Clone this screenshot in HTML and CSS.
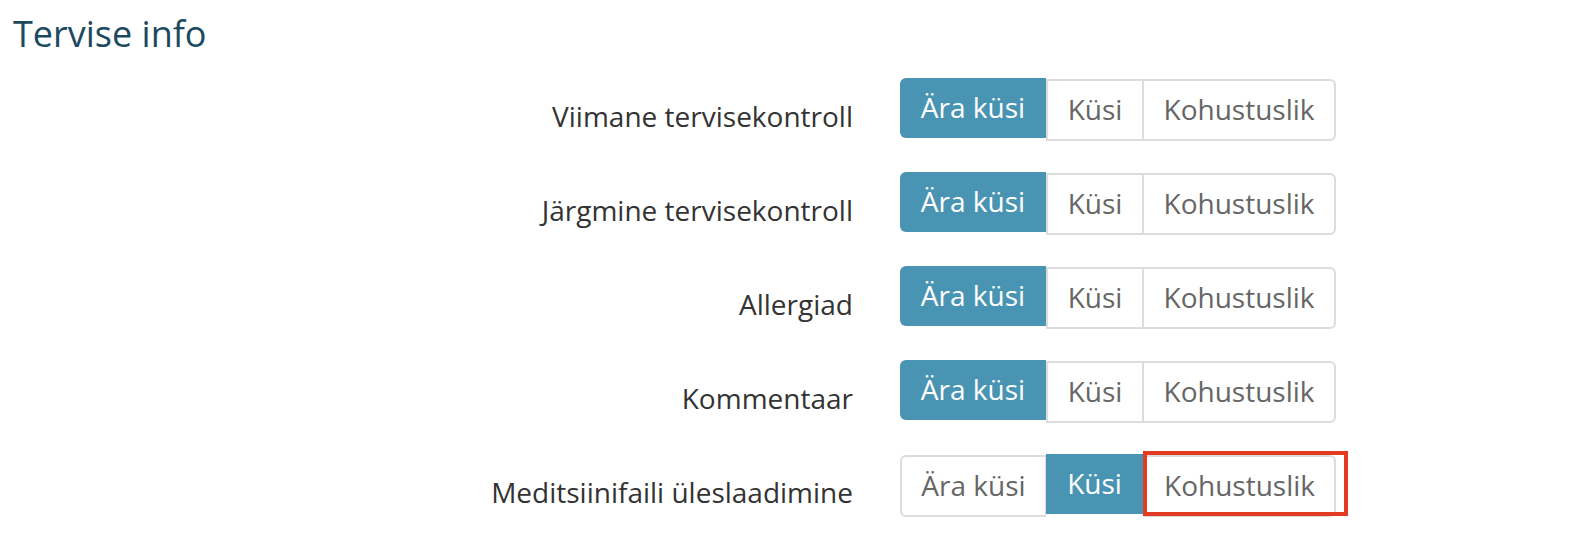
FILE: index.html
```html
<!DOCTYPE html>
<html lang="et">
<head>
    <meta charset="UTF-8">
    <title>Tervise info</title>
    <link rel="stylesheet" href="styles.css">
</head>
<body>
    <div class="section">
        <div class="section-title">Tervise info</div>

        <div class="field-row">
            <div class="field-label">Viimane tervisekontroll</div>
            <div class="toggle-group">
                <button class="toggle active">Ära küsi</button>
                <button class="toggle">Küsi</button>
                <button class="toggle">Kohustuslik</button>
            </div>
        </div>

        <div class="field-row">
            <div class="field-label">Järgmine tervisekontroll</div>
            <div class="toggle-group">
                <button class="toggle active">Ära küsi</button>
                <button class="toggle">Küsi</button>
                <button class="toggle">Kohustuslik</button>
            </div>
        </div>

        <div class="field-row">
            <div class="field-label">Allergiad</div>
            <div class="toggle-group">
                <button class="toggle active">Ära küsi</button>
                <button class="toggle">Küsi</button>
                <button class="toggle">Kohustuslik</button>
            </div>
        </div>

        <div class="field-row">
            <div class="field-label">Kommentaar</div>
            <div class="toggle-group">
                <button class="toggle active">Ära küsi</button>
                <button class="toggle">Küsi</button>
                <button class="toggle">Kohustuslik</button>
            </div>
        </div>

        <div class="field-row">
            <div class="field-label">Meditsiinifaili üleslaadimine</div>
            <div class="toggle-group">
                <button class="toggle">Ära küsi</button>
                <button class="toggle active">Küsi</button>
                <button class="toggle highlighted">Kohustuslik<span class="highlight-box"></span></button>
            </div>
        </div>
    </div>
</body>
</html>
```

FILE: styles.css
```css
body {
    font-family: "Open Sans", "DejaVu Sans", sans-serif;
    margin: 0;
    padding: 0;
    background: #fff;
    color: #333;
}
.section {
    padding: 13px 0 0 13px;
}
.section-title {
    font-size: 36px;
    line-height: 42px;
    color: #1b4a5f;
    margin-bottom: 23px;
}
.field-row {
    display: flex;
    align-items: flex-start;
    height: 94px;
}
.field-label {
    width: 840px;
    text-align: right;
    font-size: 28px;
    line-height: 60px;
    padding-top: 8px;
    color: #333;
}
.toggle-group {
    display: flex;
    align-items: flex-start;
    margin-left: 47px;
}
.toggle {
    font-family: inherit;
    font-size: 28px;
    height: 62px;
    margin-top: 1px;
    padding: 0 0 3px 0;
    background: #fff;
    color: #666;
    border: 2px solid #dcdcdc;
    border-left-width: 1px;
    border-right-width: 1px;
    cursor: pointer;
}
.toggle:first-child {
    border-left-width: 2px;
    border-radius: 6px 0 0 6px;
}
.toggle:last-child {
    border-right-width: 2px;
    border-radius: 0 6px 6px 0;
}
.toggle.active {
    background: #4a94b3;
    color: #fff;
    border: none;
    height: 60px;
    margin-top: 0;
}
.toggle.active + .toggle {
    border-left-width: 2px;
}
.toggle:nth-child(1) { width: 146px; }
.toggle:nth-child(2) { width: 97px; }
.toggle:nth-child(3) { width: 193px; }
.highlighted {
    position: relative;
}
.highlight-box {
    position: absolute;
    left: -2px;
    top: -6px;
    width: 197px;
    height: 57px;
    border: 4px solid #e33b22;
}
```
